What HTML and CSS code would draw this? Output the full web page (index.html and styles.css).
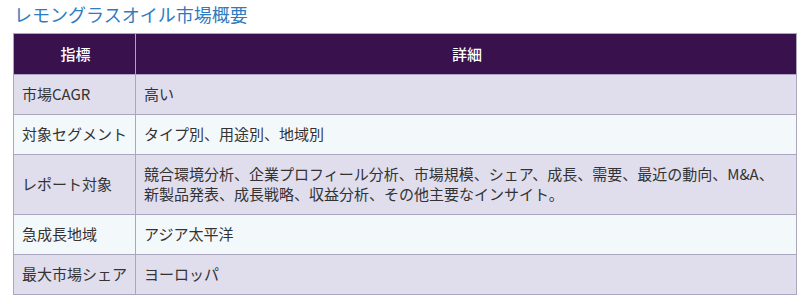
FILE: index.html
```html
<!DOCTYPE html>
<html lang="ja">
<head>
<meta charset="utf-8">
<link rel="stylesheet" href="styles.css">
</head>
<body>
<div class="wrap">
  <h2 class="title">レモングラスオイル市場概要</h2>
  <table class="summary">
    <colgroup>
      <col class="col-key">
      <col class="col-val">
    </colgroup>
    <thead>
      <tr><th>指標</th><th>詳細</th></tr>
    </thead>
    <tbody>
      <tr><td class="key">市場CAGR</td><td>高い</td></tr>
      <tr><td class="key">対象セグメント</td><td>タイプ別、用途別、地域別</td></tr>
      <tr><td class="key">レポート対象</td><td>競合環境分析、企業プロフィール分析、市場規模、シェア、成長、需要、最近の動向、M&amp;A、<br>新製品発表、成長戦略、収益分析、その他主要なインサイト。</td></tr>
      <tr><td class="key">急成長地域</td><td>アジア太平洋</td></tr>
      <tr><td class="key">最大市場シェア</td><td>ヨーロッパ</td></tr>
    </tbody>
  </table>
</div>
</body>
</html>
```
FILE: styles.css
```css
html, body {
  margin: 0;
  padding: 0;
  background: #ffffff;
}
.wrap {
  padding: 2px 7px 0 13px;
  font-family: "Noto Sans CJK JP", "Noto Sans", sans-serif;
}
.title {
  margin: 0 0 6px 1px;
  font-size: 18px;
  font-weight: normal;
  line-height: 25px;
  color: #2f7bbf;
}
.summary {
  width: 784px;
  table-layout: fixed;
  border-collapse: collapse;
  border: 1px solid #aaa6bf;
  font-size: 15px;
  color: #333333;
}
.col-key {
  width: 122px;
}
.summary th,
.summary td {
  border: 1px solid #aaa6bf;
  padding: 9px 6px 10px 8px;
  line-height: 20px;
  text-align: left;
  vertical-align: middle;
}
.summary .key {
  white-space: nowrap;
}
.summary th {
  background: #38114d;
  color: #ffffff;
  font-weight: 500;
  text-align: center;
  height: 21px;
}
.summary tbody tr:nth-child(odd) td {
  background: #e0dded;
}
.summary tbody tr:nth-child(even) td {
  background: #f3f8fb;
}
```
